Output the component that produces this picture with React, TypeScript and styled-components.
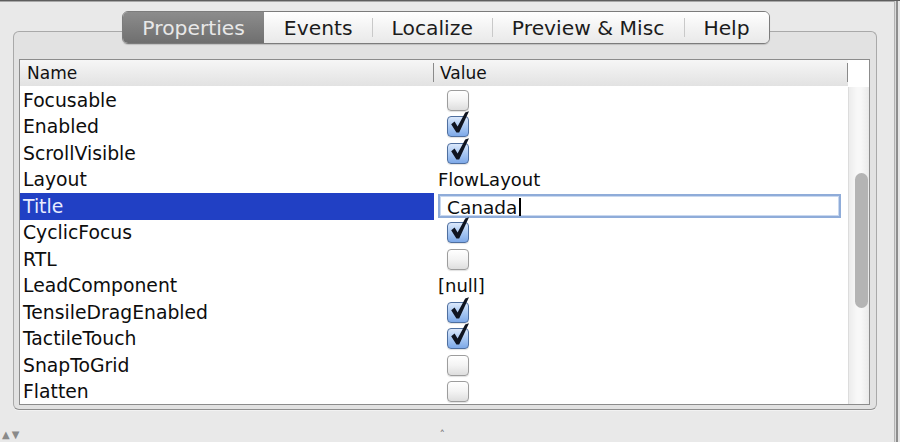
import React from "react";
import styled, { createGlobalStyle } from "styled-components";

const Global = createGlobalStyle`
  html, body { margin: 0; padding: 0; background: #e9e9e9; }
  body { font-family: "DejaVu Sans", "Liberation Sans", sans-serif; }
`;

const Window = styled.div`
  width: 900px;
  height: 442px;
  box-sizing: border-box;
  border-top: 1px solid #5e5e5e;
  box-shadow: inset 0 1px 0 #a8a8a8;
  background: #e9e9e9;
  display: flex;
  overflow: hidden;
`;

const Main = styled.div`
  width: 894px;
  display: flex;
  flex-direction: column;
  padding-top: 10px;
  box-sizing: border-box;
`;

const RightEdge = styled.div`
  width: 6px;
  background: linear-gradient(
    to right,
    #b4b4b4 0px, #b4b4b4 1px,
    #dadada 1px, #dadada 2px,
    #8e8e8e 2px, #8e8e8e 4px,
    #e6e6e6 4px
  );
`;

const TabBar = styled.div`
  display: flex;
  justify-content: center;
  position: relative;
  z-index: 2;
  margin-left: 13px;
  width: 866px;
`;

const Tabs = styled.div`
  display: flex;
  height: 33px;
  border: 1px solid #7c7c7c;
  border-radius: 6px;
  overflow: hidden;
  box-sizing: border-box;
  box-shadow: 0 1px 1px rgba(0, 0, 0, 0.15);
`;

const Tab = styled.div<{ $active?: boolean; $sep?: boolean }>`
  position: relative;
  display: flex;
  align-items: center;
  padding: 0 19.5px;
  font-size: 20.3px;
  color: ${(p) => (p.$active ? "#e8e8e8" : "#1c1c1c")};
  background: ${(p) =>
    p.$active
      ? "linear-gradient(to bottom, #8c8c8c, #6f6f6f)"
      : "linear-gradient(to bottom, #ffffff, #f1f1f1 60%, #e9e9e9)"};
  ${(p) =>
    p.$sep
      ? `&::before {
          content: "";
          position: absolute;
          left: 0;
          top: 6px;
          bottom: 6px;
          width: 1px;
          background: #c9c9c9;
        }`
      : ""}
`;

const Panel = styled.div`
  margin-top: -13px;
  margin-left: 13px;
  width: 864px;
  height: 379px;
  box-sizing: border-box;
  border: 1px solid #a9a9a9;
  border-bottom-color: #8f8f8f;
  border-radius: 6px;
  background: #e2e2e2;
  padding: 27px 6px 4px 5px;
  box-shadow: 0 1px 0 #f2f2f2;
`;

const Table = styled.div`
  width: 851px;
  height: 346px;
  box-sizing: border-box;
  border: 1px solid #8c8c8c;
  background: #ffffff;
  display: grid;
  grid-template-columns: 1fr 21px;
  grid-template-rows: 27px 1fr;
`;

const Header = styled.div`
  display: grid;
  grid-template-columns: 414px 1fr;
  background: linear-gradient(to bottom, #f6f6f6, #ececec 50%, #e2e2e2);
  border-bottom: 1px solid #ffffff;
`;

const HeaderCell = styled.div<{ $divider?: boolean }>`
  position: relative;
  display: flex;
  align-items: center;
  padding-left: ${(p) => (p.$divider ? "6px" : "7px")};
  font-size: 17px;
  color: #111;
  &::after {
    content: "";
    position: absolute;
    right: 0;
    top: 3px;
    bottom: 4px;
    width: 1px;
    background: #8a8a8a;
  }
`;

const HeaderCorner = styled.div`
  background: #ffffff;
`;

const Body = styled.div`
  display: flex;
  flex-direction: column;
  overflow: hidden;
`;

const Row = styled.div`
  display: grid;
  grid-template-columns: 414px 1fr;
  height: 26.5px;
  flex: none;
`;

const NameCell = styled.div<{ $selected?: boolean }>`
  display: flex;
  align-items: center;
  padding-left: 3px;
  font-size: 18.8px;
  color: ${(p) => (p.$selected ? "#e9ecff" : "#0d0d0d")};
  background: ${(p) => (p.$selected ? "#2140c4" : "transparent")};
`;

const ValueCell = styled.div`
  display: flex;
  align-items: center;
  padding-left: 4px;
  font-size: 18px;
  color: #0d0d0d;
`;

const Box = styled.div<{ $checked?: boolean }>`
  position: relative;
  margin-left: 9px;
  width: 22px;
  height: 21px;
  box-sizing: border-box;
  border-radius: 4px;
  border: 1px solid ${(p) => (p.$checked ? "#4f6f9f" : "#9d9d9d")};
  background: ${(p) =>
    p.$checked
      ? "linear-gradient(to bottom, #dbe8fb, #a9c8f2 50%, #7ea9e8)"
      : "linear-gradient(to bottom, #ffffff, #f3f3f3 50%, #dedede)"};
  box-shadow: 0 1px 1px rgba(0, 0, 0, 0.12);
`;

const Tick = styled.svg`
  position: absolute;
  left: 1px;
  top: -6px;
  width: 22px;
  height: 24px;
  overflow: visible;
`;

const Field = styled.div`
  display: flex;
  align-items: center;
  width: 403px;
  height: 24px;
  box-sizing: border-box;
  border: 2px solid #8facd9;
  box-shadow: inset 0 0 0 1px #c9d8ef;
  padding: 2px 0 0 7px;
  font-size: 18.5px;
  color: #0d0d0d;
  overflow: hidden;
`;

const Caret = styled.span`
  display: inline-block;
  width: 1.5px;
  height: 18px;
  margin-left: 2px;
  background: #000;
`;

const ScrollTrack = styled.div`
  box-sizing: border-box;
  border-left: 1px solid #dcdcdc;
  background: linear-gradient(to right, #ececec, #f8f8f8 40%, #f8f8f8 60%, #eaeaea);
  padding: 86px 2px 0 6px;
`;

const Thumb = styled.div`
  width: 13px;
  height: 135px;
  border-radius: 7px;
  background: #b4b4b4;
`;

const BottomBar = styled.div`
  flex: 1;
  display: flex;
  align-items: flex-end;
  padding: 0 0 2px 2px;
  color: #8a8a8a;
`;

const Sorter = styled.span`
  font-size: 10px;
  letter-spacing: 2px;
  line-height: 10px;
`;

const Grip = styled.span`
  margin-left: 418px;
  font-size: 11px;
  line-height: 10px;
  color: #777;
`;

type Row =
  | { name: string; kind: "check"; checked: boolean }
  | { name: string; kind: "text"; value: string }
  | { name: string; kind: "edit"; value: string };

const rows: Row[] = [
  { name: "Focusable", kind: "check", checked: false },
  { name: "Enabled", kind: "check", checked: true },
  { name: "ScrollVisible", kind: "check", checked: true },
  { name: "Layout", kind: "text", value: "FlowLayout" },
  { name: "Title", kind: "edit", value: "Canada" },
  { name: "CyclicFocus", kind: "check", checked: true },
  { name: "RTL", kind: "check", checked: false },
  { name: "LeadComponent", kind: "text", value: "[null]" },
  { name: "TensileDragEnabled", kind: "check", checked: true },
  { name: "TactileTouch", kind: "check", checked: true },
  { name: "SnapToGrid", kind: "check", checked: false },
  { name: "Flatten", kind: "check", checked: false },
];

const tabs = ["Properties", "Events", "Localize", "Preview & Misc", "Help"];

function CheckBox({ checked }: { checked: boolean }) {
  return (
    <Box $checked={checked}>
      {checked && (
        <Tick viewBox="0 0 22 24">
          <path
            d="M2.2 13.2 L5.6 10.6 L8.6 15.6 L16.2 1.4 L20 0.2 L10.2 21.6 L7.4 21.6 Z"
            fill="#0f1420"
          />
        </Tick>
      )}
    </Box>
  );
}

export default function App() {
  return (
    <>
      <Global />
      <Window>
        <Main>
          <TabBar>
            <Tabs>
              {tabs.map((t, i) => (
                <Tab key={t} $active={i === 0} $sep={i > 1}>
                  {t}
                </Tab>
              ))}
            </Tabs>
          </TabBar>
          <Panel>
            <Table>
              <Header>
                <HeaderCell>Name</HeaderCell>
                <HeaderCell $divider>Value</HeaderCell>
              </Header>
              <HeaderCorner />
              <Body>
                {rows.map((r) => (
                  <Row key={r.name}>
                    <NameCell $selected={r.kind === "edit"}>{r.name}</NameCell>
                    <ValueCell>
                      {r.kind === "check" && <CheckBox checked={r.checked} />}
                      {r.kind === "text" && r.value}
                      {r.kind === "edit" && (
                        <Field>
                          {r.value}
                          <Caret />
                        </Field>
                      )}
                    </ValueCell>
                  </Row>
                ))}
              </Body>
              <ScrollTrack>
                <Thumb />
              </ScrollTrack>
            </Table>
          </Panel>
          <BottomBar>
            <Sorter>▲▼</Sorter>
            <Grip>˄</Grip>
          </BottomBar>
        </Main>
        <RightEdge />
      </Window>
    </>
  );
}
